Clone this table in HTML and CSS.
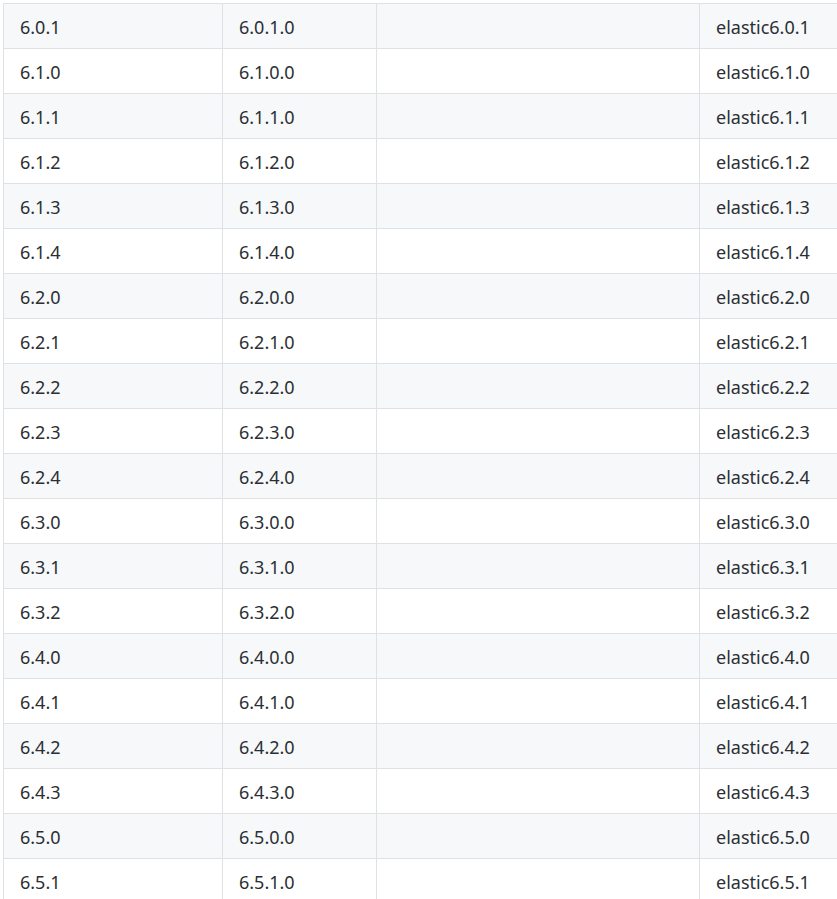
FILE: index.html
```html
<!DOCTYPE html>
<html>
<head>
<meta charset="utf-8">
<link rel="stylesheet" href="styles.css">
</head>
<body>
<div class="wrap">
<table class="versions">
<colgroup><col class="c1"><col class="c2"><col class="c3"><col class="c4"></colgroup>
<tbody>
<tr><td>6.0.1</td><td>6.0.1.0</td><td></td><td>elastic6.0.1</td></tr>
<tr><td>6.1.0</td><td>6.1.0.0</td><td></td><td>elastic6.1.0</td></tr>
<tr><td>6.1.1</td><td>6.1.1.0</td><td></td><td>elastic6.1.1</td></tr>
<tr><td>6.1.2</td><td>6.1.2.0</td><td></td><td>elastic6.1.2</td></tr>
<tr><td>6.1.3</td><td>6.1.3.0</td><td></td><td>elastic6.1.3</td></tr>
<tr><td>6.1.4</td><td>6.1.4.0</td><td></td><td>elastic6.1.4</td></tr>
<tr><td>6.2.0</td><td>6.2.0.0</td><td></td><td>elastic6.2.0</td></tr>
<tr><td>6.2.1</td><td>6.2.1.0</td><td></td><td>elastic6.2.1</td></tr>
<tr><td>6.2.2</td><td>6.2.2.0</td><td></td><td>elastic6.2.2</td></tr>
<tr><td>6.2.3</td><td>6.2.3.0</td><td></td><td>elastic6.2.3</td></tr>
<tr><td>6.2.4</td><td>6.2.4.0</td><td></td><td>elastic6.2.4</td></tr>
<tr><td>6.3.0</td><td>6.3.0.0</td><td></td><td>elastic6.3.0</td></tr>
<tr><td>6.3.1</td><td>6.3.1.0</td><td></td><td>elastic6.3.1</td></tr>
<tr><td>6.3.2</td><td>6.3.2.0</td><td></td><td>elastic6.3.2</td></tr>
<tr><td>6.4.0</td><td>6.4.0.0</td><td></td><td>elastic6.4.0</td></tr>
<tr><td>6.4.1</td><td>6.4.1.0</td><td></td><td>elastic6.4.1</td></tr>
<tr><td>6.4.2</td><td>6.4.2.0</td><td></td><td>elastic6.4.2</td></tr>
<tr><td>6.4.3</td><td>6.4.3.0</td><td></td><td>elastic6.4.3</td></tr>
<tr><td>6.5.0</td><td>6.5.0.0</td><td></td><td>elastic6.5.0</td></tr>
<tr><td>6.5.1</td><td>6.5.1.0</td><td></td><td>elastic6.5.1</td></tr>
</tbody>
</table>
</div>
</body>
</html>
```

FILE: styles.css
```css
html, body {
  margin: 0;
  padding: 0;
  overflow: hidden;
  background: #fff;
}
.wrap {
  margin: 3px 0 0 3px;
  width: 834px;
  height: 896px;
  overflow: hidden;
}
.versions {
  border-collapse: collapse;
  table-layout: fixed;
  width: 857px;
  font-family: "Noto Sans", "Open Sans", sans-serif;
  font-size: 18px;
  line-height: 24px;
  color: #2b2f33;
}
.c1 { width: 219px; }
.c2 { width: 154px; }
.c3 { width: 323px; }
.c4 { width: 160px; }
.versions td {
  border: 1px solid #dfe2e5;
  padding: 11px 16px 9px;
  height: 24px;
  white-space: nowrap;
}
.versions tr:nth-child(odd) td {
  background: #f6f8fa;
}
```
